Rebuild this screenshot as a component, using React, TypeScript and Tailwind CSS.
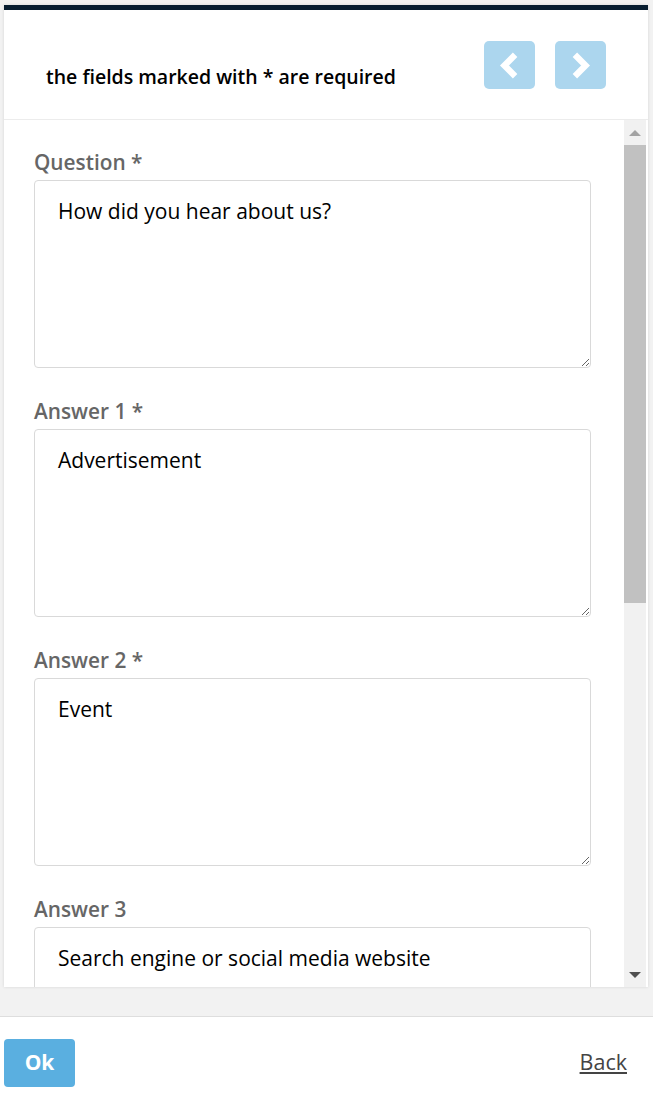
import React from "react";

const fields = [
  { label: "Question *", value: "How did you hear about us?" },
  { label: "Answer 1 *", value: "Advertisement" },
  { label: "Answer 2 *", value: "Event" },
  { label: "Answer 3", value: "Search engine or social media website" },
];

function Chevron(props: { dir: "left" | "right" }) {
  const d = props.dir === "left" ? "M17 2.5 L7.5 12 L17 21.5" : "M7 2.5 L16.5 12 L7 21.5";
  return (
    <svg width="27" height="27" viewBox="0 0 24 24" fill="none">
      <path d={d} stroke="white" strokeWidth="5.6" strokeLinecap="butt" strokeLinejoin="miter" />
    </svg>
  );
}

export default function App() {
  return (
    <div className="h-[1095px] bg-[#f2f2f2] flex flex-col font-['Open_Sans',sans-serif] overflow-hidden">
      <div className="pt-[5px] pl-[4px] pr-[5px]">
        <div className="bg-white h-[982px] flex flex-col shadow-[0_0_3px_rgba(0,0,0,0.12)]">
          <div className="h-[5px] bg-[#071d30]" />
          <div className="h-[110px] flex justify-between border-b border-[#ececec] shrink-0">
            <div className="pl-[42px] pt-[56px] text-[19.5px] leading-[22px] font-semibold text-black">
              the fields marked with * are required
            </div>
            <div className="flex gap-[20px] pr-[42px] pt-[31px]">
              <button className="w-[51px] h-[48px] rounded-[5px] bg-[#acd6ee] flex items-center justify-center">
                <Chevron dir="left" />
              </button>
              <button className="w-[51px] h-[48px] rounded-[5px] bg-[#acd6ee] flex items-center justify-center">
                <Chevron dir="right" />
              </button>
            </div>
          </div>
          <div className="flex-1 flex overflow-hidden">
            <div className="flex-1 pl-[30px] pr-[33px] pt-[28px] overflow-hidden">
              {fields.map((f) => (
                <div key={f.label} className="mb-[29px]">
                  <div className="text-[20.8px] leading-[28px] font-semibold text-[#666666] mb-[4px]">{f.label}</div>
                  <textarea
                    defaultValue={f.value}
                    className="block w-full h-[188px] border border-[#d9d9d9] rounded-[4px] px-[23px] pt-[16px] pb-[17px] text-[21px] leading-[28px] text-black outline-none"
                  />
                </div>
              ))}
            </div>
            <div className="w-[22px] mr-[2px] bg-[#f1f1f1] flex flex-col items-center">
              <div className="h-[25px] flex items-center justify-center">
                <div className="w-0 h-0 border-l-[6px] border-r-[6px] border-b-[6px] border-l-transparent border-r-transparent border-b-[#a3a3a3]" />
              </div>
              <div className="w-full h-[458px] bg-[#c1c1c1]" />
              <div className="flex-1" />
              <div className="h-[25px] flex items-center justify-center">
                <div className="w-0 h-0 border-l-[6px] border-r-[6px] border-t-[6px] border-l-transparent border-r-transparent border-t-[#505050]" />
              </div>
            </div>
          </div>
        </div>
      </div>
      <div className="mt-[29px] border-t border-[#dedede] bg-white flex-1 flex items-start justify-between">
        <button className="ml-[4px] mt-[22px] w-[71px] h-[48px] rounded-[4px] bg-[#5aafe0] text-white text-[21px] font-bold">
          Ok
        </button>
        <a href="#" className="mr-[26px] mt-[31px] text-[21.5px] leading-[28px] text-[#444444] underline">
          Back
        </a>
      </div>
    </div>
  );
}
